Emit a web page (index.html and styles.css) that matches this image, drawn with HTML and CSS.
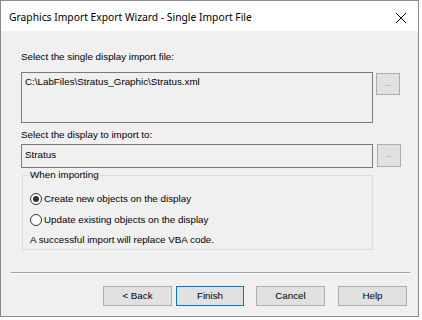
FILE: index.html
```html
<!DOCTYPE html>
<html>
<head>
<meta charset="utf-8">
<link rel="stylesheet" href="styles.css">
</head>
<body>
<div class="window">
  <div class="titlebar">
    <span class="title">Graphics Import Export Wizard - Single Import File</span>
    <svg class="close" width="12" height="12" viewBox="0 0 12 12"><path d="M1 1 L11 11 M11 1 L1 11" stroke="#000" stroke-width="1" fill="none"/></svg>
  </div>
  <div class="content">
    <div class="label first">Select the single display import file:</div>
    <div class="row">
      <div class="textbox tall">C:\LabFiles\Stratus_Graphic\Stratus.xml</div>
      <div class="browse b1">...</div>
    </div>
    <div class="label second">Select the display to import to:</div>
    <div class="row">
      <div class="textbox short">Stratus</div>
      <div class="browse b2">...</div>
    </div>
    <fieldset class="group">
      <legend class="legend">When importing</legend>
      <div class="radio-row r1"><span class="radio checked"></span><span>Create new objects on the display</span></div>
      <div class="radio-row r2"><span class="radio"></span><span>Update existing objects on the display</span></div>
      <div class="note">A successful import will replace VBA code.</div>
    </fieldset>
    <div class="separator"></div>
    <div class="buttons">
      <div class="btn back">&lt; Back</div>
      <div class="btn finish">Finish</div>
      <div class="btn cancel">Cancel</div>
      <div class="btn help">Help</div>
    </div>
  </div>
</div>
</body>
</html>
```

FILE: styles.css
```css
html, body {
  margin: 0;
  padding: 0;
  background: #ffffff;
}
.window {
  box-sizing: border-box;
  width: 419px;
  height: 317px;
  border: 1px solid #8a8a8a;
  background: #f0f0f0;
  display: flex;
  flex-direction: column;
  font-family: "Liberation Sans", Arial, sans-serif;
  font-size: 9.8px;
  color: #000;
}
.titlebar {
  height: 30px;
  background: #ffffff;
  display: flex;
  align-items: center;
  padding-left: 8px;
  padding-right: 6px;
  flex-shrink: 0;
}
.title {
  font-family: "Noto Sans", "Open Sans", sans-serif;
  font-size: 10.3px;
  color: #000;
  flex: 1;
  padding-top: 2px;
}
.close {
  margin-right: 5px;
  margin-top: 3px;
}
.content {
  flex: 1;
  padding-left: 20px;
  display: flex;
  flex-direction: column;
}
.label {
  line-height: 12px;
  height: 12px;
}
.label.first {
  margin-top: 20px;
}
.label.second {
  margin-top: 6px;
}
.row {
  display: flex;
  align-items: flex-start;
}
.textbox {
  box-sizing: border-box;
  width: 352px;
  border: 1px solid #7a7a7a;
  background: #f0f0f0;
  padding-left: 3px;
  line-height: 12px;
}
.textbox.tall {
  height: 51px;
  padding-top: 3px;
  margin-top: 9px;
}
.textbox.short {
  height: 24px;
  padding-top: 4px;
  margin-top: 3px;
}
.browse {
  box-sizing: border-box;
  width: 24px;
  height: 22px;
  background: #e1e1e1;
  border: 1px solid #adadad;
  color: #6d6d6d;
  font-size: 7px;
  text-align: center;
  line-height: 20px;
}
.b1 {
  margin-left: 3px;
  margin-top: 10px;
}
.b2 {
  margin-left: 4px;
  margin-top: 3px;
  height: 23px;
}
.group {
  box-sizing: border-box;
  width: 351px;
  margin: 1px 0 0 1px;
  padding: 0 0 3px 7px;
  border: 1px solid #dcdcdc;
  min-width: 0;
}
.legend {
  padding: 0;
  line-height: 12px;
  height: 12px;
}
.radio-row {
  display: flex;
  align-items: center;
  height: 14px;
  line-height: 12px;
}
.r1 {
  margin-top: 11px;
}
.r2 {
  margin-top: 7px;
}
.radio {
  box-sizing: border-box;
  width: 12px;
  height: 12px;
  border: 1px solid #333;
  border-radius: 50%;
  background: #fff;
  margin-right: 2px;
  display: flex;
  align-items: center;
  justify-content: center;
}
.radio.checked::after {
  content: "";
  width: 6px;
  height: 6px;
  border-radius: 50%;
  background: #333;
}
.note {
  margin-top: 7px;
  line-height: 12px;
  height: 12px;
}
.separator {
  width: 399px;
  margin-left: -10px;
  margin-top: 22px;
  border-top: 1px solid #a0a0a0;
  border-bottom: 1px solid #ffffff;
}
.buttons {
  display: flex;
  margin-top: 12px;
  margin-left: 82px;
}
.btn {
  box-sizing: border-box;
  height: 20px;
  background: #e1e1e1;
  border: 1px solid #adadad;
  text-align: center;
  line-height: 18px;
}
.back {
  width: 69px;
}
.finish {
  width: 68px;
  margin-left: 4px;
  border-color: #0078d7;
}
.cancel {
  width: 69px;
  margin-left: 12px;
}
.help {
  width: 69px;
  margin-left: 13px;
}
```
